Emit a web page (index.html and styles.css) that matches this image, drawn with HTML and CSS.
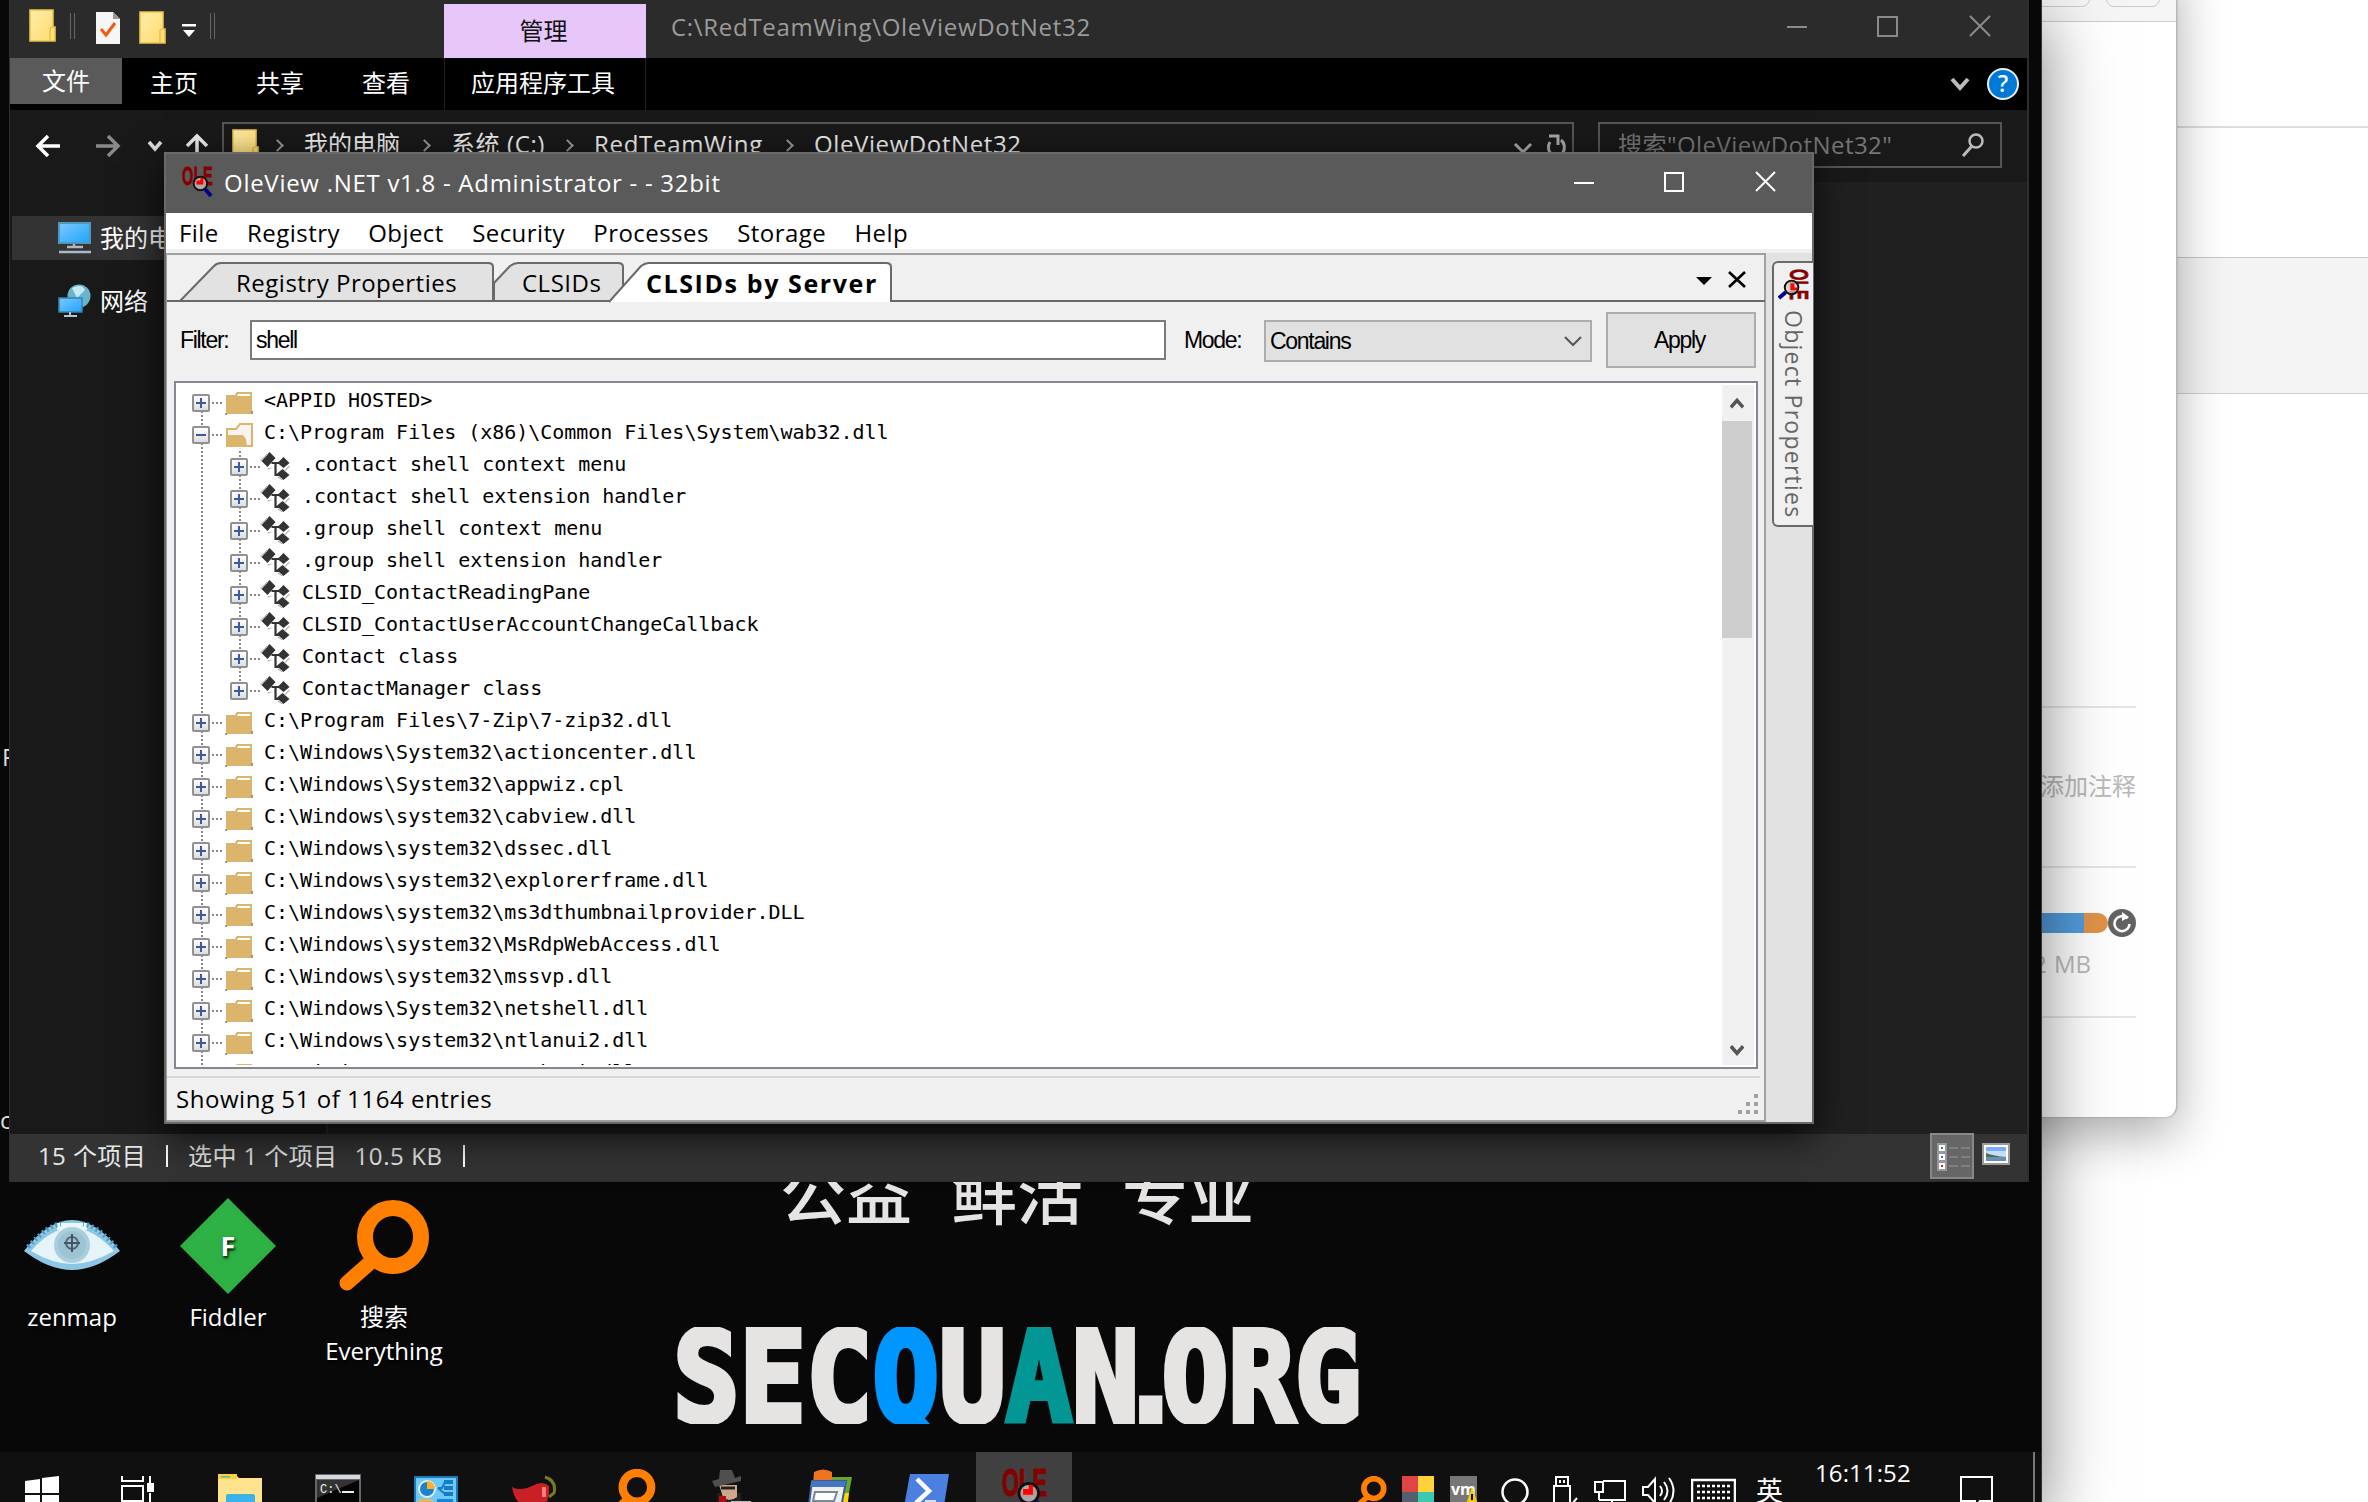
FILE: index.html
```html
<!DOCTYPE html>
<html lang="zh-CN">
<head>
<meta charset="utf-8">
<title>OleView .NET</title>
<link rel="stylesheet" href="styles.css">
</head>
<body>
<svg width="0" height="0" class="defs">
  <defs>
    <linearGradient id="fold" x1="0" y1="0" x2="1" y2="1"><stop offset="0" stop-color="#ffeca8"/><stop offset="1" stop-color="#ffdc70"/></linearGradient>
    <linearGradient id="scr" x1="0" y1="0" x2="1" y2="1"><stop offset="0" stop-color="#7cc9ff"/><stop offset="1" stop-color="#1fa4fa"/></linearGradient>
  </defs>
  <symbol id="i-folder" viewBox="0 0 27 33"><path d="M1 1h23v17h2v14H1z" fill="url(#fold)" stroke="#e9c34e" stroke-width="1.6"/><path d="M21 32V20q0-2 3-2" fill="none" stroke="#e9c34e" stroke-width="1.6"/></symbol>
  <symbol id="i-tree" viewBox="0 0 28 24"><path d="M10 1h17v20H10z" fill="#f7f3ea"/><path d="M1 4h9l2-3h15v22H1z" fill="#dcb46c"/><path d="M13 3h12v2H12z" fill="#fff"/><path d="M27 23v-3M0 23h2" stroke="#999" stroke-width="2"/></symbol>
  <symbol id="i-treeopen" viewBox="0 0 28 24"><path d="M2 23V6h9l4-5h12v22z" fill="#f6f4f0" stroke="#dcb46c" stroke-width="2"/><path d="M1 12h17l3 4 1 7H1z" fill="#dcb46c"/></symbol>
  <symbol id="i-class" viewBox="0 0 32 28"><path d="M2 9 10 0l6 6-8 9zM18 11l6-6 6 6-6 5zM17 22l6-5 7 6-6 5z" fill="#333"/><path d="M12 11h9M16 11v12h5" stroke="#333" stroke-width="2.2" fill="none"/><path d="M8 2 1 9M12 16l-4 1M30 14l-5 5M18 25l5 3" stroke="#bbb" stroke-width="1.2"/></symbol>
  <symbol id="i-ole" viewBox="0 0 32 32"><text x="0" y="20" textLength="32" lengthAdjust="spacingAndGlyphs" font-family="Liberation Sans" font-weight="700" font-size="27" fill="#850000" stroke="#850000" stroke-width=".8">OLE</text><circle cx="19" cy="18" r="7" fill="#ccc" fill-opacity=".75" stroke="#111" stroke-width="2"/><path d="M15 15h4v-3h3v7h-7z" fill="#f00"/><path d="m24 24 6 7" stroke="#000090" stroke-width="4"/></symbol>
  <symbol id="i-search" viewBox="0 0 60 60"><circle cx="38" cy="21" r="16.500" fill="none" stroke="#ff8000" stroke-width="9.500"/><path d="M27 35 6 54" stroke="#ff8000" stroke-width="9.500" stroke-linecap="round"/></symbol>
</svg>

<div class="back"><div class="back-top"></div><div class="back-mid"></div><div class="back-panel"></div></div>

<section class="mac">
  <header class="mac-bar"><i></i><i></i></header>
  <div class="mac-body">
    <div class="mac-gap"></div>
    <div class="note">添加注释</div>
    <div class="disk">
      <div class="usage"><span class="blue"></span><span class="orange"></span>
        <svg width="28" height="28" viewBox="0 0 28 28"><circle cx="14" cy="14" r="14" fill="#636363"/><path d="M19.500 9.500A7.500 7.500 0 1 0 21.500 15" fill="none" stroke="#fff" stroke-width="2.500"/><path d="m14 3 7 5-7 4z" fill="#fff"/></svg></div>
      <div class="size">2 MB</div>
    </div>
  </div>
</section>

<main class="vm">
  <div class="desktop">
    <span class="peek p1">P</span><span class="peek p2">c</span>
    <div class="slogan">公益<b></b>鲜活<b></b>专业</div>
    <div class="wordmark"><span>SEC</span><span class="q">Q</span><span>U</span><span class="a">A</span><span>N</span><span class="dot">.</span><span>ORG</span></div>
    <div class="shortcut s1"><svg width="98" height="98" viewBox="0 0 98 98"><path d="M1 54Q25 23 49 23T97 54Q72 73 49 73T1 54z" fill="#8cc8e6"/><path d="M8 54Q28 31 49 31T91 54Q68 67 49 67T8 54z" fill="#e6f4fa"/><path d="M34 26h30v7H34z" fill="#eaf8fc"/><circle cx="49" cy="48" r="18" fill="#a9cfdf"/><circle cx="49" cy="48" r="14" fill="#9cc4d3"/><circle cx="49" cy="46" r="6" fill="none" stroke="#567" stroke-width="2"/><path d="M49 37v18M41 46h16" stroke="#456" stroke-width="2"/><path d="M5 50Q25 28 38 27M93 50Q73 28 60 27" stroke="#4a9cc9" stroke-width="5" stroke-dasharray="2 3" fill="none"/></svg><span>zenmap</span></div>
    <div class="shortcut s2"><svg width="98" height="98" viewBox="0 0 98 98"><path d="M49 1 97 49 49 97 1 49z" fill="#2db044"/><text x="49" y="59" text-anchor="middle" font-family="Open Sans" font-weight="700" font-size="27" fill="#fff">F</text></svg><span>Fiddler</span></div>
    <div class="shortcut s3"><svg width="98" height="98" viewBox="0 0 98 98"><ellipse cx="58" cy="40" rx="28" ry="29" fill="none" stroke="#ff8000" stroke-width="16"/><path d="M38 63 12 86" stroke="#ff8000" stroke-width="15" stroke-linecap="round"/></svg><span>搜索<br>Everything</span></div>

    <section class="explorer">
      <header class="ex-title">
        <svg width="27" height="33"><use href="#i-folder"/></svg><i class="bar b1"></i>
        <svg class="doc" width="24" height="32" viewBox="0 0 24 32"><path d="M0 0h17l7 7v25H0z" fill="#f6f6f6"/><path d="M17 0v7h7z" fill="#999"/><path d="m5 17 5 6 9-12" fill="none" stroke="#f25a13" stroke-width="3"/></svg>
        <svg class="f2" width="27" height="33"><use href="#i-folder"/></svg>
        <svg class="more" width="14" height="14" viewBox="0 0 14 14"><path d="M0 0h14v2.500H0zM1 6h12l-6 7z" fill="#fff"/></svg><i class="bar"></i>
        <div class="manage">管理</div>
        <div class="path">C:\RedTeamWing\OleViewDotNet32</div>
        <svg class="caps" width="204" height="22" viewBox="0 0 204 22"><path d="M0 12h20M91 2h19v19H91zM183 1l20 20M203 1l-20 20" fill="none" stroke="#8a8a8a" stroke-width="2"/></svg>
      </header>
      <nav class="ribbon"><span class="file">文件</span><span>主页</span><span>共享</span><span>查看</span><span class="tools">应用程序工具</span>
        <svg class="rib-r" width="72" height="34" viewBox="0 0 72 34"><path d="m3 12 8 9 8-9" fill="none" stroke="#bbb" stroke-width="4"/><circle cx="54" cy="17" r="15" fill="#0078d7" stroke="#e8f0fa" stroke-width="2"/><text x="54" y="25" text-anchor="middle" font-family="Open Sans" font-size="23" font-weight="600" fill="#fff">?</text></svg></nav>
      <div class="address">
        <svg width="184" height="32" viewBox="0 0 184 32" fill="none"><path d="M30 16H8M18 6 8 16l10 10" stroke="#fff" stroke-width="3.500"/><path d="M66 16h22M78 6l10 10-10 10" stroke="#8a8a8a" stroke-width="3.500"/><path d="m119 12 6 7 6-7" stroke="#ddd" stroke-width="3.500"/><path d="M167 28V6M157 16l10-10 10 10" stroke="#eee" stroke-width="3.500"/></svg>
        <div class="crumbs"><svg width="27" height="33"><use href="#i-folder"/></svg><em></em><span class="c1">我的电脑</span><em></em><span class="c2">系统 (C:)</span><em></em><span class="c3">RedTeamWing</span><em></em><span class="c4">OleViewDotNet32</span>
          <svg class="reload" width="60" height="28" viewBox="0 0 60 28" fill="none" stroke="#aaa" stroke-width="3"><path d="m3 13 8 8 8-8"/><path d="M37 5h9v9M49 9a8 9 0 1 1-11 2"/></svg></div>
        <div class="find">搜索"OleViewDotNet32"<svg width="26" height="26" viewBox="0 0 26 26"><circle cx="16" cy="9" r="6.500" fill="none" stroke="#bbb" stroke-width="2.500"/><path d="M12 14 3 24" stroke="#bbb" stroke-width="3"/></svg></div>
      </div>
      <div class="ex-body">
        <aside>
          <div class="place sel"><svg width="34" height="32" viewBox="0 0 34 32"><path d="M1 1h31v20H1z" fill="url(#scr)" stroke="#5096bd" stroke-width="2"/><path d="M16 22v3M9 25h16M1 30h32" stroke="#a9b9c6" stroke-width="2.500"/></svg>我的电脑</div>
          <div class="place"><svg width="34" height="34" viewBox="0 0 34 34"><circle cx="21" cy="12" r="11.500" fill="#69b4cd"/><path d="M14 4q10-5 13 2l-8 8z" fill="#c7eaf0"/><path d="M1 14h23v14H1z" fill="url(#scr)" stroke="#3484b4" stroke-width="1.500"/><path d="M6 32h13M12 28v4" stroke="#b7c5cc" stroke-width="2"/></svg>网络</div>
        </aside>
      </div>
      <footer class="ex-status"><span>15 个项目</span><i></i><span>选中 1 个项目</span><span class="kb">10.5 KB</span><i></i>
        <div class="view on"><svg width="36" height="28" viewBox="0 0 36 28"><path d="M1 0h10v28H1z" fill="#999"/><path d="M3 2h6v6H3zM3 11h6v6H3zM3 20h6v6H3z" fill="#fff"/><path d="M5 4h2v2H5z" fill="#285"/><path d="M5 13h2v2H5z" fill="#46e"/><path d="M5 22h2v2H5z" fill="#c22"/><path d="M13 5h9M25 5h9M13 14h9M25 14h9M13 23h9M25 23h9" stroke="#808080" stroke-width="2"/></svg></div>
        <div class="view pic"><svg width="28" height="22" viewBox="0 0 28 22"><path d="M0 0h28v22H0z" fill="#9a9a9a"/><path d="M2 2h24v18H2z" fill="#fff"/><path d="M4 4h20v14H4z" fill="#78acff"/><path d="M4 8h20v6H4z" fill="#c8ddf0"/><path d="M4 10q8 3 20 4v1H4z" fill="#456f56"/><path d="M4 14h20v4H4z" fill="#6790ba"/></svg></div>
      </footer>
    </section>

    <section class="ole">
      <header class="ole-title"><svg class="logo" width="31" height="31"><use href="#i-ole"/></svg><span>OleView .NET v1.8 - Administrator - - 32bit</span>
        <svg class="caps" width="204" height="22" viewBox="0 0 204 22"><path d="M1 12h20M92 2h18v18H92zM183 1l19 19M202 1l-19 19" fill="none" stroke="#fff" stroke-width="2"/></svg></header>
      <nav class="menu"><span>File</span><span>Registry</span><span>Object</span><span>Security</span><span>Processes</span><span>Storage</span><span>Help</span></nav>
      <div class="ole-body">
        <div class="dock">
          <div class="tabs">
            <svg class="shape" width="1598" height="48" viewBox="0 0 1598 48" stroke="#696969" stroke-width="2"><path d="M13 46 47 11q3-3 7-3h267q5 0 5 4v34z" fill="#e2e2e2"/><path d="M327 46V28l16-17q4-3 8-3h100q5 0 5 4v34z" fill="#e2e2e2"/><path d="M0 46h1598" /><path d="M442 47 474 11q4-3 8-3h237q5 0 5 4v35" fill="#fff"/></svg>
            <span class="t1">Registry Properties</span><span class="t2">CLSIDs</span><span class="t3">CLSIDs by Server</span>
            <svg class="tabx" width="54" height="20" viewBox="0 0 54 20"><path d="M1 8h16l-8 8z"/><path d="m34 3 16 15M50 3 34 18" stroke="#000" stroke-width="2.600"/></svg>
          </div>
          <div class="filter"><label>Filter:</label><div class="input">shell</div><label class="mode">Mode:</label><div class="select">Contains<svg width="18" height="12" viewBox="0 0 18 12"><path d="m1 2 8 8 8-8" fill="none" stroke="#555" stroke-width="2"/></svg></div><div class="btn">Apply</div></div>
          <div class="treebox">
            <div class="tree">
              <div class="row"><i class="pm"></i><svg><use href="#i-tree"/></svg>&lt;APPID HOSTED&gt;</div>
              <div class="row"><i class="pm minus"></i><svg><use href="#i-treeopen"/></svg>C:\Program Files (x86)\Common Files\System\wab32.dll</div>
              <div class="kids">
                <div class="row"><i class="pm"></i><svg><use href="#i-class"/></svg>.contact shell context menu</div>
                <div class="row"><i class="pm"></i><svg><use href="#i-class"/></svg>.contact shell extension handler</div>
                <div class="row"><i class="pm"></i><svg><use href="#i-class"/></svg>.group shell context menu</div>
                <div class="row"><i class="pm"></i><svg><use href="#i-class"/></svg>.group shell extension handler</div>
                <div class="row"><i class="pm"></i><svg><use href="#i-class"/></svg>CLSID_ContactReadingPane</div>
                <div class="row"><i class="pm"></i><svg><use href="#i-class"/></svg>CLSID_ContactUserAccountChangeCallback</div>
                <div class="row"><i class="pm"></i><svg><use href="#i-class"/></svg>Contact class</div>
                <div class="row"><i class="pm"></i><svg><use href="#i-class"/></svg>ContactManager class</div>
              </div>
              <div class="row"><i class="pm"></i><svg><use href="#i-tree"/></svg>C:\Program Files\7-Zip\7-zip32.dll</div>
              <div class="row"><i class="pm"></i><svg><use href="#i-tree"/></svg>C:\Windows\System32\actioncenter.dll</div>
              <div class="row"><i class="pm"></i><svg><use href="#i-tree"/></svg>C:\Windows\System32\appwiz.cpl</div>
              <div class="row"><i class="pm"></i><svg><use href="#i-tree"/></svg>C:\Windows\system32\cabview.dll</div>
              <div class="row"><i class="pm"></i><svg><use href="#i-tree"/></svg>C:\Windows\system32\dssec.dll</div>
              <div class="row"><i class="pm"></i><svg><use href="#i-tree"/></svg>C:\Windows\system32\explorerframe.dll</div>
              <div class="row"><i class="pm"></i><svg><use href="#i-tree"/></svg>C:\Windows\system32\ms3dthumbnailprovider.DLL</div>
              <div class="row"><i class="pm"></i><svg><use href="#i-tree"/></svg>C:\Windows\system32\MsRdpWebAccess.dll</div>
              <div class="row"><i class="pm"></i><svg><use href="#i-tree"/></svg>C:\Windows\system32\mssvp.dll</div>
              <div class="row"><i class="pm"></i><svg><use href="#i-tree"/></svg>C:\Windows\System32\netshell.dll</div>
              <div class="row"><i class="pm"></i><svg><use href="#i-tree"/></svg>C:\Windows\system32\ntlanui2.dll</div>
              <div class="row"><i class="pm"></i><svg><use href="#i-tree"/></svg>C:\Windows\system32\ntshrui.dll</div>
            </div>
            <div class="scroll"><svg width="14" height="36" viewBox="0 0 16 34"><path d="m1 22 7-8 7 8" fill="none" stroke="#555" stroke-width="4"/></svg><b></b><svg class="down" width="14" height="34" viewBox="0 0 16 34"><path d="m1 15 7 8 7-8" fill="none" stroke="#555" stroke-width="4"/></svg></div>
          </div>
          <div class="ole-status">Showing 51 of 1164 entries<svg width="22" height="22" viewBox="0 0 22 22"><path d="M16 0h4v4h-4zM8 8h4v4H8zM16 8h4v4h-4zM0 16h4v4H0zM8 16h4v4H8zM16 16h4v4h-4z" fill="#a0a0a0"/></svg></div>
        </div>
        <div class="side"><div class="sidetab"><svg width="31" height="31"><use href="#i-ole" transform="rotate(90 15.500 15.500)"/></svg><span>Object Properties</span></div></div>
      </div>
    </section>
  </div>

  <footer class="taskbar">
    <div class="tb start"><svg width="34" height="34" viewBox="0 0 34 34"><path d="M0 5l15-2v14H0zM17 2l17-2v17H17zM0 19h15v14H0zM17 19h17v15H17z" fill="#fff"/></svg></div>
    <div class="tb tv"><svg width="34" height="34" viewBox="0 0 34 34" fill="none" stroke="#fff" stroke-width="2"><path d="M1 0v5h21V0M1 10h21v15H1zM29 0v7M29 17v14M1 34v-5h21v5"/><path d="M27 8h5v7h-5z" fill="#fff"/></svg></div>
    <div class="tb"><svg width="44" height="40" viewBox="0 0 44 40"><path d="M0 4V1h18l3 3h23v36H0z" fill="#ffe38e"/><path d="M0 0h19v5H0z" fill="#fbd03c"/><path d="M3 2h9v1.500H3z" fill="#5b9"/><path d="M8 40V22q0-2 2-2h25q2 0 2 2v18h-8V28H16v12z" fill="#38b4e8"/></svg></div>
    <div class="tb"><svg width="46" height="40" viewBox="0 0 46 40"><path d="M0 0h46v40H0z" fill="#666"/><path d="M1 1h44v4H1z" fill="#d4d8e2"/><path d="M2 6h42v34H2z" fill="#050505"/><path d="M2 6h42L2 24z" fill="#333"/><text x="5" y="19" font-family="Liberation Mono" font-size="12" fill="#eee">C:\.</text><path d="M27 18h12" stroke="#eee" stroke-width="2"/></svg></div>
    <div class="tb"><svg width="44" height="40" viewBox="0 0 44 40"><path d="M1 3h42v37H1z" fill="#6ec8fa" stroke="#1979b6" stroke-width="2"/><circle cx="13" cy="15" r="8" fill="#1a82cf" stroke="#dff2ff" stroke-width="2"/><path d="M13 15V7a8 8 0 0 1 8 8z" fill="#ffad22"/><path d="M24 14h4l3-6M24 14l7 6" fill="none" stroke="#167cc4" stroke-width="2"/><path d="M30 8h9M30 14h9M30 20h9" fill="none" stroke="#167cc4" stroke-width="4"/><path d="M5 27h14" stroke="#e5b65c" stroke-width="4"/><path d="M23 27h16" stroke="#1584d5" stroke-width="4"/></svg></div>
    <div class="tb"><svg width="46" height="40" viewBox="0 0 46 40"><path d="M1 13q9 5 20-1t17 0q1 14-6 22H14Q3 27 1 13z" fill="#c92025"/><path d="M34 3q12 4 9 16l-5 4" fill="none" stroke="#777b22" stroke-width="3"/><path d="M33 13v10" stroke="#f08080" stroke-width="4"/></svg></div>
    <div class="tb"><svg class="srch" width="52" height="52"><use href="#i-search"/></svg></div>
    <div class="tb"><svg class="spy" width="46" height="46" viewBox="0 -4 46 46"><path d="M10 20h24v22H12z" fill="#222"/><path d="M12 12h18v12q-8 6-14 0z" fill="#cda98a"/><path d="M13 -3h12l3 8 6-2v5L8 14 5 8l7-2z" fill="#4f4f4f"/><path d="M14 15h14" stroke="#222" stroke-width="3"/><path d="M12 23h7v19h-7z" fill="#b00d15"/><path d="M24 28h20v14H24z" fill="#bbb"/></svg></div>
    <div class="tb"><svg class="spy" width="48" height="50" viewBox="0 0 48 50"><path d="M28 8h20l-8 42H28z" fill="#69a72b"/><path d="M38 24h7l-3 26h-7z" fill="#ffd400"/><path d="M10 3q9-5 18 0v14H9z" fill="#ee7422"/><path d="M8 12h34l-7 38H3z" fill="#f0eee9" stroke="#355a9e" stroke-width="2"/><path d="M8 12h34l-2 6H6z" fill="#4476c3"/><path d="M11 23h22l-3 9H9z" fill="#fff" stroke="#789" stroke-width="2"/></svg></div>
    <div class="tb"><svg width="46" height="38" viewBox="0 0 46 38"><path d="M7 0h39l-6 38H0z" fill="#4b7fe0"/><path d="m14 5 12 12-13 12" fill="none" stroke="#fff" stroke-width="4.500"/><path d="M22 28h11" stroke="#dde" stroke-width="4"/></svg></div>
    <div class="tb active"><svg width="45" height="45"><use href="#i-ole"/></svg></div>
    <div class="tray">
      <svg class="t-s" width="36" height="36"><use href="#i-search"/></svg>
      <svg width="32" height="34" viewBox="0 0 32 34"><path d="M0 0h16v16H0z" fill="#e04545"/><path d="M16 0h16v16H16z" fill="#ffd23c"/><path d="M0 16h16v18H0z" fill="#53606d"/><path d="M16 16h16v18H16z" fill="#3cc9b0"/></svg>
      <svg width="30" height="34" viewBox="0 0 30 34"><path d="M0 0h27v34H0z" fill="#777"/><text x="1" y="19" font-family="Open Sans" font-weight="700" font-size="16" fill="#fff">vm</text><path d="m22 11 8 23H14z" fill="#f5cf00"/><path d="M21 18h2v6h-2z"/></svg>
      <svg width="28" height="32" viewBox="0 0 28 32"><circle cx="14" cy="16" r="12.500" fill="none" stroke="#fff" stroke-width="2.500"/></svg>
      <svg width="26" height="34" viewBox="0 0 26 34" fill="none" stroke="#fff" stroke-width="2"><path d="M4 1h12v9H4zM2 10h16v24H2zM8 4v3M12 4v3M20 28l5-6"/></svg>
      <svg width="32" height="30" viewBox="0 0 32 30" fill="none" stroke="#fff" stroke-width="2"><path d="M9 5h22v19H5M1 6h8v10H1zM5 16v8M18 24v6"/></svg>
      <svg width="33" height="32" viewBox="0 0 33 32" fill="none" stroke="#fff" stroke-width="2"><path d="M1 11h5l7-8v24l-7-8H1zM18 10q4 5 0 10M22 6q7 9 0 18M27 2q9 13 0 26"/></svg>
      <svg width="45" height="32" viewBox="0 0 45 32" fill="none" stroke="#fff" stroke-width="2.500"><path d="M1 4h43v29H1z"/><path d="M6 10h34M6 16h34M6 22h34" stroke-dasharray="3 2"/></svg>
      <span class="ime">英</span><span class="clock">16:11:52</span>
      <svg class="act" width="33" height="32" viewBox="0 0 33 32" fill="none" stroke="#fff" stroke-width="2"><path d="M1 1h31v24H20l-5 6v-6H1z"/></svg>
      <i class="peekline"></i>
    </div>
  </footer>
</main>
</body>
</html>
```
FILE: styles.css
```css
*{box-sizing:border-box}
body{margin:0;width:2368px;height:1502px;overflow:hidden;background:#fff;position:relative;font:24px/32px "Open Sans","Noto Sans CJK SC",sans-serif}
svg{display:block;flex:none}
.defs{position:absolute}
span,label{white-space:nowrap}

/* windows behind the virtual machine */
.back{display:flex;flex-direction:column}
.back-top{height:128px;border-bottom:2px solid #ddd}
.back-mid{height:130px;border-bottom:1px solid #c8c8c8}
.back-panel{height:136px;background:#f4f4f4;border-bottom:1px solid #d0d0d0}
.mac{position:absolute;left:1700px;top:-40px;width:477px;height:1157px;background:#fff;border-right:1px solid #b8b8b8;border-radius:0 0 11px 11px;box-shadow:0 18px 50px rgba(0,0,0,.32),0 0 2px rgba(0,0,0,.3)}
.mac-bar{height:62px;background:#f5f5f5;border-bottom:1px solid #ccc;display:flex;gap:16px;padding-left:336px}
.mac-bar i{width:54px;height:47px;border:1px solid #ccc;border-radius:8px}
.mac-body{width:436px}
.mac-gap{height:686px;border-bottom:2px solid #e6e6e6}
.note{height:160px;border-bottom:2px solid #e6e6e6;text-align:right;line-height:156px;color:#b9b9b9}
.disk{height:150px;border-bottom:2px solid #e6e6e6;padding-top:39px}
.usage{display:flex;align-items:center;height:32px}
.blue{width:384px;height:20px;background:#529cdc}
.orange{width:24px;height:20px;background:#e29249;border-radius:0 10px 10px 0}
.size{padding-left:333px;line-height:50px;color:#b9b9b9;word-spacing:1px}

.vm{position:absolute;left:0;top:0;width:2042px;height:1502px;display:flex;flex-direction:column;background:#080808;border-right:1px solid #333;box-shadow:0 20px 65px rgba(0,0,0,.5)}
.desktop{height:1452px;position:relative;overflow:hidden}
.peek{position:absolute;color:#ddd;left:2px}
.p1{top:741px}
.p2{top:1104px;left:0}
.slogan{position:absolute;left:780px;top:1142px;display:flex;font:500 66px/96px "Noto Sans CJK SC",sans-serif;color:#e6e3e3}
.slogan b{width:39px}
.wordmark{position:absolute;left:673px;top:1303px;display:flex;font:bold 125px/150px "DejaVu Sans Mono",monospace;color:#e6e3e3;transform:scaleX(.884);transform-origin:0 0;-webkit-text-stroke:6px currentColor;clip-path:inset(24px -10px 29px -10px)}
.q{color:#0096ff}
.a{color:#029695}
.dot{width:26px;text-indent:-24px}
.shortcut{position:absolute;top:1197px;width:160px;display:flex;flex-direction:column;align-items:center;color:#fff;text-align:center;line-height:34px;gap:5px;text-shadow:1px 2px 3px #000}
.s1{left:-8px}
.s2{left:148px}
.s3{left:304px}

/* explorer */
.explorer{position:absolute;left:9px;top:0;width:2020px;height:1182px;display:flex;flex-direction:column;background:#202020;color:#fff;border:solid #2e2e2e;border-width:0 2px 1px 1px}
.ex-title{height:58px;background:#2b2b2b;display:flex;padding:9px 225px 0 19px;align-items:flex-start}
.bar{width:5px;height:26px;margin-top:4px;border:solid #666;border-width:0 1px}
.b1{margin-left:14px}
.doc{margin:3px 0 0 21px}
.f2{margin:2px 0 0 19px}
.more{margin:15px 14px 0 16px}
.manage{width:202px;height:54px;margin:-5px 0 0 229px;background:#e7c7fa;color:#111;text-align:center;line-height:53px;padding-right:3px}
.path{margin:2px auto 0 25px;color:#9b9b9b;letter-spacing:.7px}
.ex-title .caps{margin:6px -189px 0 0}
.ribbon{height:52px;background:#000;display:flex;line-height:49px}
.ribbon span{width:106px;text-align:center}
.ribbon .file{width:112px;height:46px;background:#5a5a5a;line-height:46px;margin-right:-1px}
.ribbon .tools{width:202px;margin-left:5px;padding-right:4px;border:solid #222;border-width:0 1px}
.rib-r{margin:9px 6px 0 auto}
.address{height:72px;background:#191919;display:flex;padding:12px 23px 14px 20px}
.address>svg{margin:8px 8px 0 0}
.crumbs{width:1352px;border:2px solid #555;display:flex;align-items:center;padding-left:8px;line-height:40px;color:#eee}
.crumbs em{width:9px;height:9px;border:solid #999;border-width:2px 2px 0 0;transform:rotate(45deg);margin:0 22px 0 14px;flex:none}
.crumbs span{margin-top:-3px}
.crumbs .c1{width:102px}
.crumbs .c2{width:98px;letter-spacing:.6px}
.crumbs .c3{width:175px;letter-spacing:.7px}
.crumbs .c4{letter-spacing:.6px}
.reload{margin-left:auto}
.find{width:404px;margin-left:24px;border:2px solid #555;color:#767676;display:flex;align-items:center;justify-content:space-between;padding:0 14px 0 18px;height:46px;letter-spacing:.45px}
.ex-body{height:952px}
.ex-body aside{width:318px;height:952px;background:#191919;border-right:2px solid #2b2b2b;padding-top:34px}
.place{height:44px;margin:0 0 19px 2px;padding-left:46px;display:flex;align-items:center;gap:8px;white-space:nowrap;overflow:hidden}
.place.sel{background:#333}
.ex-status{height:47px;background:#333;display:flex;align-items:center;padding:0 17px 3px 28px;color:#e6e6e6;letter-spacing:.4px}
.ex-status i{width:2px;height:22px;background:#fff;margin:0 20px}
.kb{margin-left:17px;letter-spacing:.6px}
.view{margin-left:auto}
.on{width:44px;height:46px;background:#666;border:2px solid #888;padding:8px 4px}
.pic{margin:0 0 4px 8px}

/* OleView */
.ole{position:absolute;left:164px;top:152px;width:1650px;height:972px;background:#f0f0f0;border:2px solid #696969;display:flex;flex-direction:column;box-shadow:0 12px 36px rgba(0,0,0,.75);color:#000;letter-spacing:.5px}
.ole-title{height:60px;background:#5a5a5a;color:#fff;display:flex;align-items:center;padding:0 35px 0 16px;letter-spacing:.72px}
.ole-title .logo{margin-top:-4px}
.ole-title span{margin:-1px auto 0 11px}
.ole-title .caps{margin-top:-3px}
.menu{height:36px;background:#fff;display:flex;padding-left:13px;gap:28.300px;line-height:40px;letter-spacing:.45px}
.ole-body{flex:1;margin-top:4px;display:flex;background:#e2e2e2}
.dock{width:1600px;border:2px solid #a0a0a0;border-width:2px 2px 2px 1px;background:#f0f0f0;display:flex;flex-direction:column}
.tabs{height:48px;display:grid;grid-template-columns:69px 286px 124px 1fr 54px;align-items:center;position:relative;padding-right:15px}
.tabs .shape{position:absolute;left:0;top:0}
.tabs span{z-index:1;grid-row:1;margin-top:7px}
.t1{grid-column:2}
.t2{grid-column:3}
.t3{grid-column:4;font-weight:700;font-size:25px;letter-spacing:1.6px}
.tabx{grid-column:5;z-index:1}
.filter{height:78px;display:flex;align-items:flex-start;padding:9px 8px 0 13px;font:23px/40px "Liberation Sans",sans-serif;letter-spacing:-1.3px}
.filter label{margin-top:8px;width:70px}
.filter .mode{margin-left:18px;width:80px}
.input{width:916px;height:40px;border:2px solid #7a7a7a;background:#fff;padding-left:4px;line-height:36px;margin-top:8px}
.select{width:328px;height:42px;margin-top:8px;border:2px solid #adadad;background:#e1e1e1;padding:0 8px 0 4px;display:flex;align-items:center;justify-content:space-between}
.btn{width:150px;height:56px;margin:0 0 0 14px;border:2px solid #adadad;background:#e1e1e1;text-align:center;line-height:52px;padding-right:3px}
.treebox{width:1584px;height:688px;margin-left:7px;border:2px solid #828790;background:#fff;display:flex;padding:2px}
.tree{flex:1;overflow:hidden;height:680px;padding:2px 0 0 14px;font:20px/30px "DejaVu Sans Mono",monospace;letter-spacing:-.03px;background:repeating-linear-gradient(#888 0 2px,transparent 2px 4px) 23px 18px/2px 100% no-repeat}
.row{height:32px;display:flex;align-items:center;white-space:pre;line-height:27px;padding-bottom:5px}
.row svg{width:28px;height:24px;margin:5px 11px 0 0}
.pm{position:relative;width:18px;height:18px;border:2px solid #919191;border-radius:2px;background:linear-gradient(#3b5aa5,#3b5aa5) 2px 6px/10px 2px no-repeat,linear-gradient(#3b5aa5,#3b5aa5) 6px 2px/2px 10px no-repeat,linear-gradient(#fff,#ddd);margin:5px 15px 0 0;flex:none}
.pm.minus{background:linear-gradient(#3b5aa5,#3b5aa5) 2px 6px/10px 2px no-repeat,linear-gradient(#fff,#ddd)}
.pm:after{content:"";position:absolute;left:18px;top:6px;width:10px;height:2px;background:repeating-linear-gradient(90deg,#888 0 2px,transparent 2px 4px)}
.kids{padding-left:38px;background:repeating-linear-gradient(#888 0 2px,transparent 2px 4px) 47px 0/2px 240px no-repeat}
.kids .pm{margin-right:11px}
.kids .row svg{width:33px;height:28px;margin:3px 10px 0 0}
.scroll{width:32px;background:#f0f0f0;display:flex;flex-direction:column;align-items:center;padding-right:2px}
.scroll b{width:30px;height:217px;background:#cdcdcd}
.down{margin-top:auto}
.ole-status{flex:1;margin:7px 4px 0 0;border-top:2px solid #d7d7d7;padding:0 0 0 9px;display:flex;justify-content:space-between;line-height:42px;letter-spacing:.55px}
.ole-status svg{margin-top:16px}
.side{flex:1;padding:8px 0 0 6px}
.sidetab{height:266px;border:2px solid #696969;border-right:0;border-radius:6px 0 0 6px;background:#f0f0f0;padding:6px 4px;display:flex;flex-direction:column;gap:10px;color:#666}
.sidetab span{writing-mode:vertical-rl;line-height:31px;letter-spacing:1.25px;font-size:23px}

/* taskbar */
.taskbar{height:50px;background:#101010;display:flex;overflow:hidden;color:#fff}
.tb{width:98px;height:50px;padding-top:22px;display:flex;justify-content:center;flex:none}
.start{width:84px;padding-top:24px}
.tv{width:107px;padding-top:24px}
.srch{margin:-5px 4px 0 0}
.spy{margin-top:-5px}
.active{background:#404040;padding-top:16px;width:96px;margin-left:1px}
.tray{flex:1;display:flex;padding:24px 6px 0 279px}
.tray svg{margin-right:16px}
.tray svg.t-s{margin-right:15px}
.tray svg:nth-child(4){margin-left:5px;margin-right:23px}
.ime{margin-left:4px;line-height:30px;font-size:27px;width:54px}
.clock{line-height:34px;margin:-20px 0 0 5px;width:146px;letter-spacing:.1px}
.act{margin-left:-1px}
.peekline{margin:-24px 0 0 auto;width:2px;height:50px;background:#777}
```
